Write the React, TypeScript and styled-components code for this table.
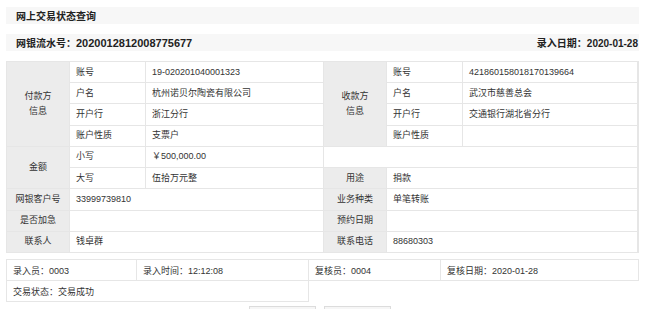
import React from 'react';
import styled, { createGlobalStyle } from 'styled-components';

const GlobalStyle = createGlobalStyle`
  * { box-sizing: border-box; }
  body {
    margin: 0;
    background: #fff;
    font-family: "Liberation Sans", "Noto Sans CJK SC", sans-serif;
    color: #333;
  }
`;

const Page = styled.div`
  padding: 7px 11px 0 6px;
  width: 650px;
  height: 309px;
  overflow: hidden;
`;

const Bar = styled.div<{ $gap?: number }>`
  display: flex;
  justify-content: space-between;
  align-items: center;
  height: 17px;
  margin-bottom: ${(p) => p.$gap ?? 10}px;
  padding: 0 1px 0 10px;
  background: #f7f7f7;
  font-size: 10px;
  font-weight: bold;
  color: #222;
`;

const Serial = styled.span`
  font-size: 11px;
`;

const InfoGrid = styled.div`
  display: grid;
  grid-template-columns: 62px 75px 177px 62px 75px 1fr;
  grid-template-rows: repeat(9, 1fr);
  height: 192px;
  gap: 1px;
  background: #e6e6e6;
  border: 1px solid #e6e6e6;
  border-right-width: 2px;
`;

const Cell = styled.div<{ $label?: boolean; $col?: string; $row?: string }>`
  display: flex;
  align-items: center;
  justify-content: ${(p) => (p.$label ? 'center' : 'flex-start')};
  padding: 0 6px;
  grid-column: ${(p) => p.$col ?? 'auto'};
  grid-row: ${(p) => p.$row ?? 'auto'};
  background: ${(p) => (p.$label ? '#ececec' : '#fff')};
  font-size: 9px;
  line-height: 15px;
  text-align: center;
  color: #333;
`;

const FootGrid = styled.div`
  display: grid;
  grid-template-columns: 130px 172px 132px 1fr;
  grid-auto-rows: 21px;
  margin-top: 6px;
  border-top: 1px solid #e6e6e6;
  border-left: 1px solid #e6e6e6;
`;

const FootCell = styled.div<{ $span?: number }>`
  display: flex;
  align-items: center;
  padding: 0 6px;
  grid-column: span ${(p) => p.$span ?? 1};
  border-right: 1px solid #e6e6e6;
  border-bottom: 1px solid #e6e6e6;
  font-size: 9px;
  color: #333;
`;

const Buttons = styled.div`
  display: flex;
  justify-content: center;
  gap: 8px;
  margin-top: 4px;
  padding-right: 6px;
`;

const Button = styled.button`
  width: 67px;
  height: 24px;
  border: 1px solid #dcdcdc;
  background: #f6f6f6;
`;

export default function App() {
  return (
    <>
      <GlobalStyle />
      <Page>
        <Bar>网上交易状态查询</Bar>
        <Bar>
          <span>
            网银流水号：<Serial>2020012812008775677</Serial>
          </span>
          <span>录入日期：2020-01-28</span>
        </Bar>

        <InfoGrid>
          <Cell $label $col="1" $row="1 / 5">
            付款方
            <br />
            信息
          </Cell>
          <Cell $col="2" $row="1">账号</Cell>
          <Cell $col="3" $row="1">19-020201040001323</Cell>
          <Cell $col="2" $row="2">户名</Cell>
          <Cell $col="3" $row="2">杭州诺贝尔陶瓷有限公司</Cell>
          <Cell $col="2" $row="3">开户行</Cell>
          <Cell $col="3" $row="3">浙江分行</Cell>
          <Cell $col="2" $row="4">账户性质</Cell>
          <Cell $col="3" $row="4">支票户</Cell>

          <Cell $label $col="4" $row="1 / 5">
            收款方
            <br />
            信息
          </Cell>
          <Cell $col="5" $row="1">账号</Cell>
          <Cell $col="6" $row="1">421860158018170139664</Cell>
          <Cell $col="5" $row="2">户名</Cell>
          <Cell $col="6" $row="2">武汉市慈善总会</Cell>
          <Cell $col="5" $row="3">开户行</Cell>
          <Cell $col="6" $row="3">交通银行湖北省分行</Cell>
          <Cell $col="5" $row="4">账户性质</Cell>
          <Cell $col="6" $row="4" />

          <Cell $label $col="1" $row="5 / 7">金额</Cell>
          <Cell $col="2" $row="5">小写</Cell>
          <Cell $col="3" $row="5">￥500,000.00</Cell>
          <Cell $col="4 / 7" $row="5" />
          <Cell $col="2" $row="6">大写</Cell>
          <Cell $col="3" $row="6">伍拾万元整</Cell>
          <Cell $label $col="4" $row="6">用途</Cell>
          <Cell $col="5 / 7" $row="6">捐款</Cell>

          <Cell $label $col="1" $row="7">网银客户号</Cell>
          <Cell $col="2 / 4" $row="7">33999739810</Cell>
          <Cell $label $col="4" $row="7">业务种类</Cell>
          <Cell $col="5 / 7" $row="7">单笔转账</Cell>

          <Cell $label $col="1" $row="8">是否加急</Cell>
          <Cell $col="2 / 4" $row="8" />
          <Cell $label $col="4" $row="8">预约日期</Cell>
          <Cell $col="5 / 7" $row="8" />

          <Cell $label $col="1" $row="9">联系人</Cell>
          <Cell $col="2 / 4" $row="9">钱卓群</Cell>
          <Cell $label $col="4" $row="9">联系电话</Cell>
          <Cell $col="5 / 7" $row="9">88680303</Cell>
        </InfoGrid>

        <FootGrid>
          <FootCell>录入员：0003</FootCell>
          <FootCell>录入时间：12:12:08</FootCell>
          <FootCell>复核员：0004</FootCell>
          <FootCell>复核日期：2020-01-28</FootCell>
          <FootCell $span={2}>交易状态：交易成功</FootCell>
        </FootGrid>

        <Buttons>
          <Button aria-label="返回" />
          <Button aria-label="打印" />
        </Buttons>
      </Page>
    </>
  );
}
